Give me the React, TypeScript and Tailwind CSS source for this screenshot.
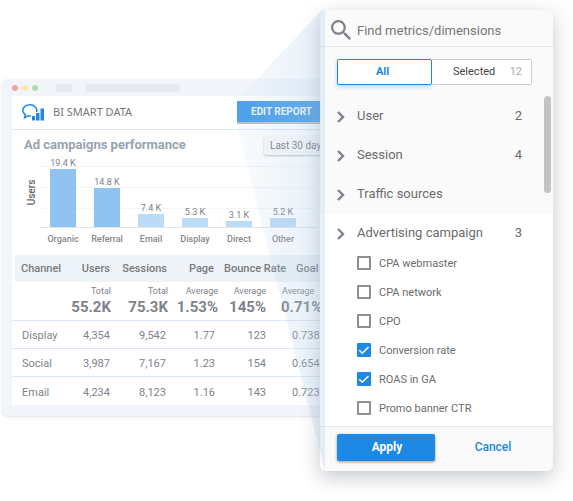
import { useState } from 'react';

const bars = [
  { label: 'Organic', value: 19.4, height: 58, color: 'bg-[#90c3f1]' },
  { label: 'Referral', value: 14.8, height: 39, color: 'bg-[#90c3f1]' },
  { label: 'Email', value: 7.4, height: 13, color: 'bg-[#bcdbf6]' },
  { label: 'Display', value: 5.3, height: 9, color: 'bg-[#bcdbf6]' },
  { label: 'Direct', value: 3.1, height: 6, color: 'bg-[#bcdbf6]' },
  { label: 'Other', value: 5.2, height: 9, color: 'bg-[#bcdbf6]' },
];

const totals = [
  { label: 'Total', value: '55.2K' },
  { label: 'Total', value: '75.3K' },
  { label: 'Average', value: '1.53%' },
  { label: 'Average', value: '145%' },
];

const rows = [
  ['Display', '4,354', '9,542', '1.77', '123', '0.738'],
  ['Social', '3,987', '7,167', '1.23', '154', '0.654'],
  ['Email', '4,234', '8,123', '1.16', '143', '0.723'],
];

const groups = [
  { name: 'User', count: 2 },
  { name: 'Session', count: 4 },
  { name: 'Traffic sources', count: null },
];

const metrics = ['CPA webmaster', 'CPA network', 'CPO', 'Conversion rate', 'ROAS in GA', 'Promo banner CTR'];

export default function App() {
  return (
    <main className="relative min-h-screen overflow-hidden bg-white pt-[79px] pb-20 font-['Roboto',sans-serif]">
      <ReportWindow />
      <MetricsPanel />
    </main>
  );
}

function ReportWindow() {
  return (
    <section className="ml-0.5 mr-[235px] overflow-hidden rounded-md bg-[#f2f6fb] px-2.5 pb-[11px] shadow-sm">
      <div className="flex h-[17px] items-center">
        <span className="h-1.5 w-1.5 rounded-full bg-[#f6a1a6]" />
        <span className="ml-1 h-1.5 w-1.5 rounded-full bg-[#f8e9a6]" />
        <span className="ml-1 h-1.5 w-1.5 rounded-full bg-[#a6e3a9]" />
        <span className="ml-[17px] h-2 w-[18px] rounded-full bg-[#e6eaee]" />
        <span className="ml-3 h-2 w-24 rounded-full bg-[#e6eaee]" />
      </div>
      <div className="bg-white">
        <header className="flex h-[34px] items-center border-b border-[#dce8f6] pl-2.5">
          <Logo />
          <h1 className="ml-[9px] flex-1 font-['Noto_Sans',sans-serif] text-[11px] text-[#777]">BI SMART DATA</h1>
          <button className="h-[23px] w-[91px] whitespace-nowrap border-b-2 border-[#bdbdbd] bg-[#459ce9] pl-3.5 text-left text-[10px] font-bold text-[#eef6fd]">
            EDIT REPORT
          </button>
        </header>

        <div className="flex h-[30px] items-center pl-3">
          <h2 className="flex-1 whitespace-nowrap text-[13px] font-bold text-[#97a3ad]">Ad campaigns performance</h2>
          <button className="h-[19px] w-16 whitespace-nowrap rounded-xs bg-[#fafafa] pl-1.5 text-left text-[10px] text-[#777] shadow-[0_1px_2px_rgba(0,0,0,0.25)]">
            Last 30 days
          </button>
        </div>

        <Chart />
        <ReportTable />
      </div>
    </section>
  );
}

function Chart() {
  return (
    <div className="flex h-[95px] pl-3">
      <div className="flex h-16 w-4 items-center justify-center">
        <span className="-rotate-90 text-[10px] font-medium text-[#666]">Users</span>
      </div>
      <div className="relative mr-3 flex-1">
        <div className="absolute inset-x-0 top-1.5 flex flex-col gap-5">
          <div className="h-px bg-[#f5f5f6]" />
          <div className="h-px bg-[#f5f5f6]" />
          <div className="h-px bg-[#f5f5f6]" />
        </div>
        <ul className="relative flex h-[68px] items-end gap-[18px] border-b border-[#e3e5e8] pl-2.5">
          {bars.map((bar) => (
            <li key={bar.label} className="flex w-[26px] shrink-0 flex-col items-center">
              <span className="whitespace-nowrap text-[9px] leading-3 text-[#7d8087]">{bar.value} K</span>
              <span className={`w-full ${bar.color}`} style={{ height: bar.height }} />
            </li>
          ))}
        </ul>
        <ul className="flex gap-[18px] pt-[5px] pl-2.5">
          {bars.map((bar) => (
            <li key={bar.label} className="flex w-[26px] shrink-0 justify-center text-[9px] leading-3 font-medium text-[#85878c]">
              {bar.label}
            </li>
          ))}
        </ul>
      </div>
    </div>
  );
}

function ReportTable() {
  return (
    <table className="w-full table-fixed text-right text-[11px] leading-4 whitespace-nowrap text-[#7f828a]">
      <colgroup>
        <col className="w-14" />
        <col className="w-11" />
        <col className="w-[57px]" />
        <col className="w-[50px]" />
        <col className="w-[61px]" />
        <col />
      </colgroup>
      <thead>
        <tr className="h-[27px] bg-[#eef3f7] text-[#777b80]">
          <th className="pl-[9px] text-left font-medium shadow-[inset_3px_0_#fff]">Channel</th>
          <th className="pr-0.5 font-medium">Users</th>
          <th className="pr-0.5 font-medium">Sessions</th>
          <th className="pr-[5px] font-medium">Page</th>
          <th className="pl-[5px] text-left font-medium">Bounce Rate</th>
          <th className="pl-4 text-left font-medium">Goal</th>
        </tr>
      </thead>
      <tbody>
        <tr className="h-[38px] border-b border-[#dce8f6]">
          <td />
          {totals.map((total, i) => (
            <td key={total.value} className={i === 3 ? 'pr-3.5' : 'pr-px'}>
              <span className="block text-[9px] leading-3">{total.label}</span>
              <strong className="block text-[15px] leading-5">{total.value}</strong>
            </td>
          ))}
          <td className="pl-px text-left">
            <span className="block pl-px text-[9px] leading-3">Average</span>
            <strong className="block text-[15px] leading-5">0.71%</strong>
          </td>
        </tr>
        {rows.map(([channel, users, sessions, page, bounce, goal]) => (
          <tr key={channel} className="h-7 border-b border-[#dce8f6] last:h-[29px] last:border-0">
            <td className="pt-1 pl-2.5 text-left">{channel}</td>
            <td className="pt-1 pr-0.5">{users}</td>
            <td className="pt-1 pr-[3px]">{sessions}</td>
            <td className="pt-1 pr-1">{page}</td>
            <td className="pt-1 pr-3.5">{bounce}</td>
            <td className="pt-1 pl-3 text-left">{goal}</td>
          </tr>
        ))}
      </tbody>
    </table>
  );
}

function MetricsPanel() {
  const [checked, setChecked] = useState(['Conversion rate', 'ROAS in GA']);

  const toggle = (name: string) =>
    setChecked((prev) => (prev.includes(name) ? prev.filter((n) => n !== name) : [...prev, name]));

  return (
    <aside className="absolute top-2.5 right-5 w-[233px]">
      <div className="overflow-hidden rounded-md bg-[#fafafa] text-[#6b6b6b]">
        <label className="flex h-[37px] items-center gap-1.5 border-b border-[#dde8f3] pt-1 pl-[11px]">
          <svg viewBox="3 3 17.5 17.5" className="h-5 w-5 shrink-0" fill="#7e818c">
            <path d="M15.5 14h-.79l-.28-.27A6.47 6.47 0 0 0 16 9.5 6.5 6.5 0 1 0 9.5 16c1.61 0 3.09-.59 4.23-1.57l.27.28v.79l5 4.99L20.49 19l-4.99-5zm-6 0C7.01 14 5 11.99 5 9.5S7.01 5 9.5 5 14 7.01 14 9.5 11.99 14 9.5 14z" />
          </svg>
          <input
            type="text"
            aria-label="Find metrics/dimensions"
            placeholder="Find metrics/dimensions"
            className="min-w-0 flex-1 pt-0.5 text-[13px] outline-none placeholder:text-[#777]"
          />
        </label>

        <div className="flex pt-3 pr-[21px] pb-3 pl-[17px] text-[11px]">
          <button className="h-[26px] w-[95px] rounded-xs border border-[#1e88e5] bg-white pr-1 font-bold text-[#1e88e5] shadow-[0_2px_4px_rgba(30,136,229,0.3)]">
            All
          </button>
          <button className="flex h-[26px] flex-1 items-center justify-between rounded-r-xs border border-l-0 border-[#ccc] bg-white pr-[9px] pl-[21px] text-[#444]">
            Selected <span className="text-[#aaa]">12</span>
          </button>
        </div>

        <div className="relative">
          {groups.map((group) => (
            <GroupRow key={group.name} name={group.name} count={group.count} />
          ))}
          <div className="bg-white pb-[11px]">
            <GroupRow name="Advertising campaign" count={3} />
            <ul className="flex flex-col gap-[15px] pt-[3px] pl-[37px]">
              {metrics.map((name) => (
                <li key={name}>
                  <label className="flex h-3.5 items-start gap-2 text-[11px] leading-4">
                    <span className="relative h-3.5 w-3.5">
                      <input
                        type="checkbox"
                        checked={checked.includes(name)}
                        onChange={() => toggle(name)}
                        className="block h-3.5 w-3.5 appearance-none rounded-[1px] border-2 border-[#8f8f8f] bg-white checked:border-[#1e88e5] checked:bg-[#1e88e5]"
                      />
                      {checked.includes(name) && (
                        <svg viewBox="0 0 14 14" className="pointer-events-none absolute inset-0" fill="none" stroke="#fff" strokeWidth="1.6">
                          <path d="M2.3 7.2l3 3 6.2-6.2" />
                        </svg>
                      )}
                    </span>
                    {name}
                  </label>
                </li>
              ))}
            </ul>
          </div>
          <div className="absolute -top-px right-0.5 h-[97px] w-[7px] rounded-full bg-[#c3c3c3]" />
        </div>

        <footer className="flex h-[45px] items-center border-t border-[#dde8f3] pr-0.5 pb-1 pl-[17px] text-xs">
          <button className="h-[27px] w-[98px] rounded-xs bg-[#1e88e5] pl-0.5 font-bold text-white shadow-[0_1px_3px_rgba(0,0,0,0.4)]">
            Apply
          </button>
          <button className="h-[27px] flex-1 font-medium text-[#1e88e5]">Cancel</button>
        </footer>
      </div>

      {/* panel shadow sits behind the beam */}
      <div className="pointer-events-none absolute inset-0 rounded-md shadow-[0_6px_20px_rgba(60,70,85,0.3)]" />

      {/* light beam from the edit button to the panel */}
      <svg viewBox="0 0 88 461" className="pointer-events-none absolute top-0 -left-[83px] h-[461px] w-[88px]">
        <defs>
          <linearGradient id="beam" x1="0" x2="1" y1="0" y2="0">
            <stop offset="0" stopColor="#b4d0ec" stopOpacity="0.08" />
            <stop offset="1" stopColor="#b4d0ec" stopOpacity="0.32" />
          </linearGradient>
        </defs>
        <path d="M0 90L84 1L88 0V461L0 116Z" fill="url(#beam)" />
      </svg>
    </aside>
  );
}

function GroupRow({ name, count }: { name: string; count: number | null }) {
  return (
    <button className="flex h-[39px] w-full items-center pr-[31px] pb-0.5 pl-[17px] text-left text-[13px]">
      <svg viewBox="0 0 8 12" className="mt-0.5 mr-3 h-3 w-2" fill="none" stroke="#7e818c" strokeWidth="2.4">
        <path d="M1 1l5 5-5 5" />
      </svg>
      <span className="flex-1">{name}</span>
      {count !== null && <span>{count}</span>}
    </button>
  );
}

function Logo() {
  return (
    <svg viewBox="0 0 22 17" className="h-[17px] w-[22px]" fill="none">
      <path
        d="M14.8 8C15.5 3.6 12 .8 8 .8 4 .8.8 3 .8 6.2c0 2 1 3.5 2.4 4.3L2.6 13.8l3.2-1.9c1 .2 2 .3 3.2.1"
        stroke="#1e88e5"
        strokeWidth="1.5"
      />
      <path d="M10 12h3v4.500h-3zM14 9h3.500v7.500H14zM18.500 4.500H22v12h-3.500z" fill="#1e88e5" />
    </svg>
  );
}
